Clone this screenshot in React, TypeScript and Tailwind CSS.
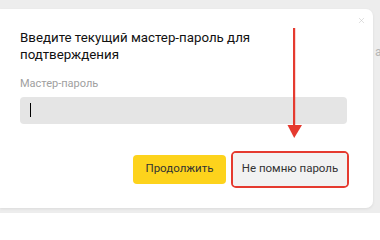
import { X } from 'lucide-react';

const font = { fontFamily: 'Roboto, "Liberation Sans", Arial, sans-serif' };

const Arrow = () => (
  <svg className="absolute left-[286px] top-[28px]" width="18" height="111" viewBox="0 0 18 111">
    <rect x="7" y="0" width="2.2" height="99" fill="#e53a2f" />
    <path d="M1.5 97 L16 97 L8.2 110 Z" fill="#e53a2f" />
  </svg>
);

const App = () => {
  return (
    <div className="relative w-[380px] h-[213px] bg-[#ededed] overflow-hidden" style={font}>
      <div className="absolute left-[375px] top-[43px] text-[12px] text-[#b5b5b5]">а</div>
      <X size={9} strokeWidth={1.4} className="absolute left-[357px] top-[16px] text-[#c4c4c4]" />

      <div className="mt-[9px] w-[373px] h-[199px] bg-white rounded-r-[7px] shadow-[0_1px_3px_rgba(0,0,0,0.08)] flex flex-col pl-[20px] pr-[26px] pt-[19.5px]">
        <h2 className="text-[13.3px] leading-[17px] text-[#111] w-[300px]">
          Введите текущий мастер-пароль для подтверждения
        </h2>

        <label className="mt-[13.5px] text-[11px] leading-[15px] text-[#a0a0a0]">Мастер-пароль</label>
        <div className="mt-[5.5px] h-[27.5px] rounded-[4px] bg-[#e5e5e5] flex items-center pl-[10px]">
          <span className="w-px h-[14px] bg-black" />
        </div>

        <div className="mt-[26.5px] flex items-center justify-end gap-[5px] -mr-[2px]">
          <button className="w-[93px] h-[29px] rounded-[4px] bg-[#fdd31c] text-[11.5px] text-[#333]">
            Продолжить
          </button>
          <div className="rounded-[5px] border-[2.5px] border-[#e53a2f]">
            <button className="w-[114px] h-[33px] rounded-[3px] bg-[#f2f2f2] text-[11.5px] text-[#333]">
              Не помню пароль
            </button>
          </div>
        </div>
      </div>

      <Arrow />
    </div>
  );
};

export default App;
